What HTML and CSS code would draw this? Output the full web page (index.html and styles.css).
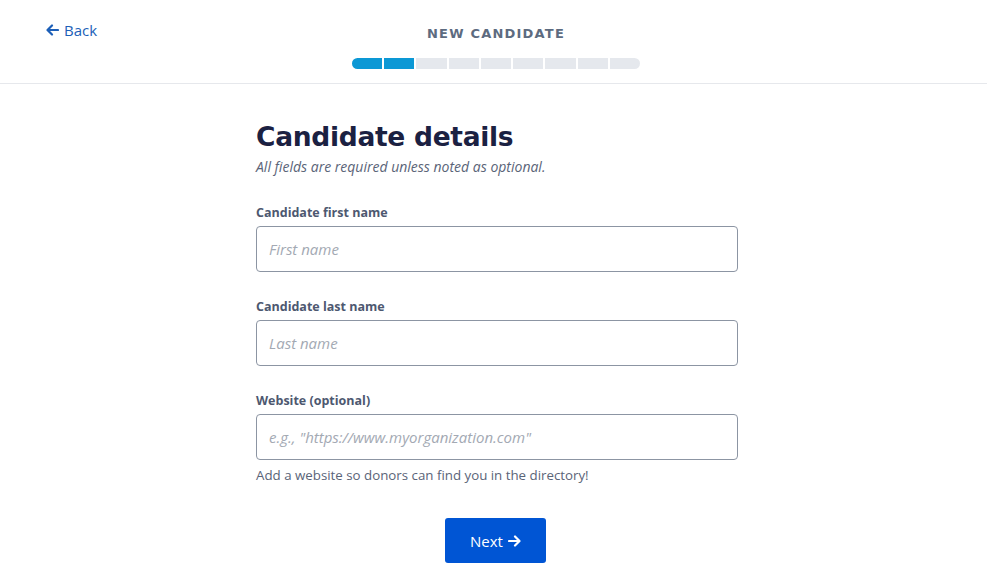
FILE: index.html
```html
<!DOCTYPE html>
<html lang="en">
<head>
    <meta charset="UTF-8">
    <meta name="viewport" content="width=device-width, initial-scale=1.0">
    <title>New Candidate</title>
    <link rel="stylesheet" href="styles.css">
</head>
<body>
    <header class="top-bar">
        <a class="back-link" href="#">
            <svg width="13" height="12" viewBox="0 0 13 12" aria-hidden="true">
                <path d="M6 1.5 1.5 6 6 10.5M1.8 6H12" fill="none" stroke="currentColor" stroke-width="2.2" stroke-linecap="round" stroke-linejoin="round"/>
            </svg>
            Back
        </a>
        <div class="top-center">
            <h1 class="page-title">NEW CANDIDATE</h1>
            <div class="progress">
                <span class="step done"></span>
                <span class="step done"></span>
                <span class="step"></span>
                <span class="step"></span>
                <span class="step"></span>
                <span class="step"></span>
                <span class="step"></span>
                <span class="step"></span>
                <span class="step"></span>
            </div>
        </div>
    </header>

    <main class="form-wrap">
        <h2 class="form-title">Candidate details</h2>
        <p class="form-note">All fields are required unless noted as optional.</p>

        <div class="field">
            <label for="first-name">Candidate first name</label>
            <input type="text" id="first-name" placeholder="First name">
        </div>

        <div class="field">
            <label for="last-name">Candidate last name</label>
            <input type="text" id="last-name" placeholder="Last name">
        </div>

        <div class="field">
            <label for="website">Website (optional)</label>
            <input type="text" id="website" placeholder="e.g., &quot;https://www.myorganization.com&quot;">
            <p class="hint">Add a website so donors can find you in the directory!</p>
        </div>

        <div class="actions">
            <button class="btn-next" type="button">Next
                <svg width="13" height="12" viewBox="0 0 13 12" aria-hidden="true">
                    <path d="M7 1.5 11.5 6 7 10.5M11.2 6H1" fill="none" stroke="currentColor" stroke-width="2.2" stroke-linecap="round" stroke-linejoin="round"/>
                </svg>
            </button>
        </div>
    </main>
</body>
</html>
```

FILE: styles.css
```css
body {
    margin: 0;
    padding-left: 7px;
    font-family: "Open Sans", "Noto Sans", sans-serif;
    background-color: #fff;
    color: #1b2240;
}

.top-bar {
    position: relative;
    height: 83px;
    border-bottom: 1px solid #e6e8ec;
    margin-left: -7px;
    padding-left: 5px;
}

.back-link {
    position: absolute;
    left: 46px;
    top: 20px;
    display: flex;
    align-items: center;
    gap: 5px;
    color: #1c5fb8;
    text-decoration: none;
    font-size: 15px;
}

.top-center {
    display: flex;
    flex-direction: column;
    align-items: center;
    padding-top: 26px;
}

.page-title {
    margin: 0;
    font-family: "DejaVu Sans", sans-serif;
    font-size: 13px;
    font-weight: bold;
    letter-spacing: 1.2px;
    color: #5d6b80;
}

.progress {
    display: flex;
    gap: 2px;
    width: 288px;
    height: 11px;
    margin-top: 17px;
    border-radius: 6px;
    overflow: hidden;
}

.step {
    flex: 1;
    background-color: #e5e8ed;
}

.step.done {
    background-color: #0c98d5;
}

.form-wrap {
    width: 482px;
    margin: 0 auto;
    padding-top: 37px;
}

.form-title {
    margin: 0;
    font-family: "DejaVu Sans", sans-serif;
    font-size: 26.5px;
    font-weight: bold;
    letter-spacing: -0.3px;
    color: #1b2142;
}

.form-note {
    margin: 5px 0 0;
    font-size: 14px;
    font-style: italic;
    color: #5a6478;
}

.field {
    margin-top: 28px;
}

.field + .field {
    margin-top: 26px;
}

.field label {
    display: block;
    font-size: 12.5px;
    font-weight: bold;
    color: #4d5870;
    margin-bottom: 5px;
}

.field input {
    box-sizing: border-box;
    width: 100%;
    height: 46px;
    padding: 0 12px;
    border: 1px solid #8c95a3;
    border-radius: 4px;
    font-family: inherit;
    font-size: 15px;
}

.field input::placeholder {
    color: #a3a9b3;
    font-style: italic;
}

.hint {
    margin: 6px 0 0;
    font-size: 13.3px;
    color: #5a6478;
}

.actions {
    display: flex;
    justify-content: center;
    margin-top: 34px;
    padding-right: 3px;
}

.btn-next {
    display: flex;
    align-items: center;
    justify-content: center;
    gap: 5px;
    width: 101px;
    height: 45px;
    border: none;
    border-radius: 3px;
    background-color: #0055d4;
    color: #fff;
    font-family: inherit;
    font-size: 15px;
}
```
